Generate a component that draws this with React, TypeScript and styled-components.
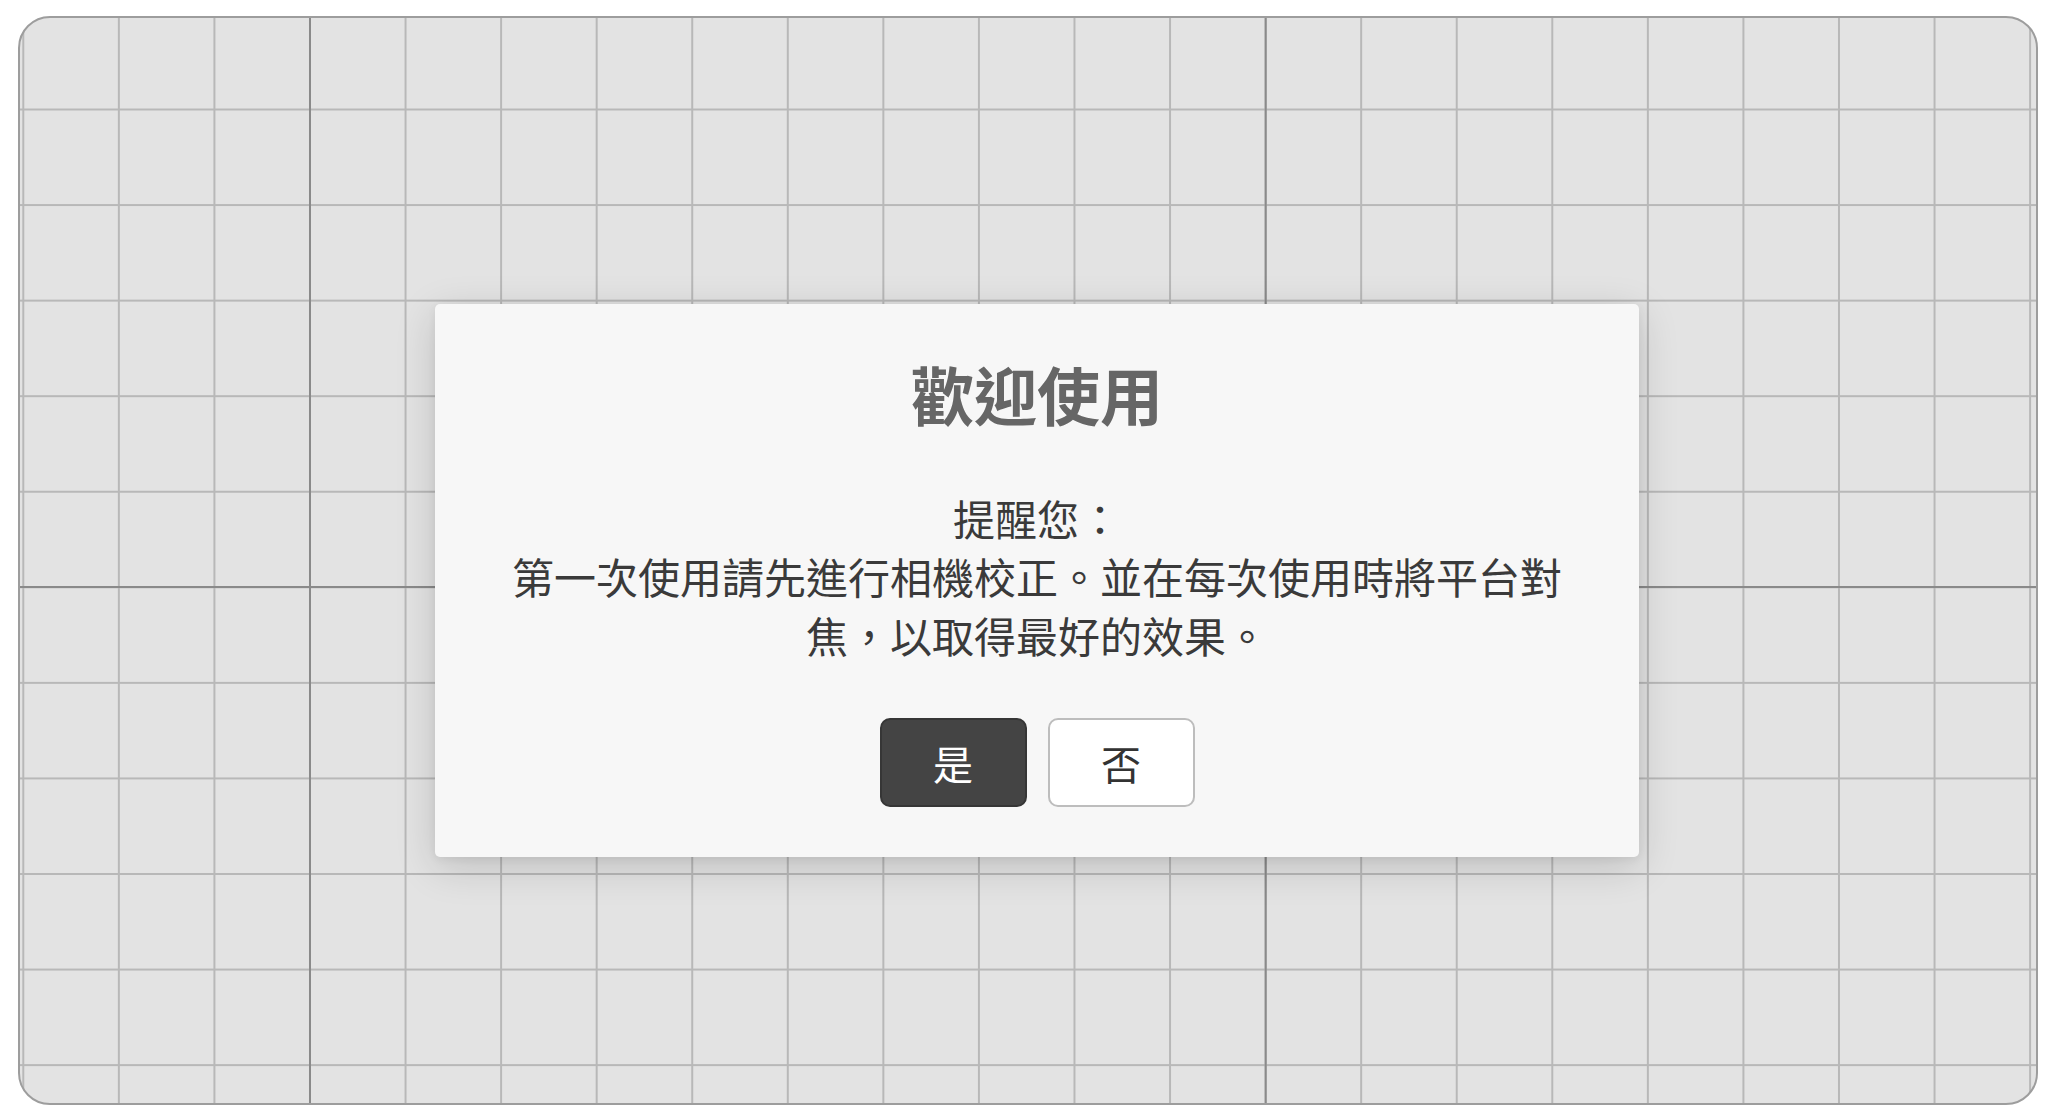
import styled, { createGlobalStyle } from 'styled-components'

const GlobalStyle = createGlobalStyle`
  html, body {
    margin: 0;
    padding: 0;
    background: #ffffff;
  }
  body {
    font-family: "Noto Sans CJK TC", "Noto Sans", sans-serif;
  }
`

const CELL = 95.57
const MAJOR = CELL * 10

const Page = styled.div`
  box-sizing: border-box;
  height: 1120px;
  padding: 16px 22px 15px 18px;
`

const Board = styled.div`
  box-sizing: border-box;
  height: 100%;
  display: flex;
  align-items: center;
  justify-content: center;
  padding: 40px 0 0 18px;
  border: 2px solid #9d9d9d;
  border-radius: 32px;
  background-color: #e3e3e3;
  background-image:
    linear-gradient(to right, #8a8a8a 0, #8a8a8a 2px, transparent 2px),
    linear-gradient(to bottom, #8a8a8a 0, #8a8a8a 2px, transparent 2px),
    linear-gradient(to right, #b8b8b8 0, #b8b8b8 2px, transparent 2px),
    linear-gradient(to bottom, #b8b8b8 0, #b8b8b8 2px, transparent 2px);
  background-size:
    ${MAJOR}px 100%,
    100% ${MAJOR}px,
    ${CELL}px 100%,
    100% ${CELL}px;
  background-position:
    289px 0,
    0 568px,
    2.3px 0,
    0 90.5px;
`

const Dialog = styled.div`
  box-sizing: border-box;
  width: 1204px;
  padding: 51px 60px 50px;
  background: #f7f7f7;
  border-radius: 5px;
  box-shadow: 0 10px 40px rgba(0, 0, 0, 0.16), 0 2px 8px rgba(0, 0, 0, 0.06);
  display: flex;
  flex-direction: column;
  align-items: center;
  text-align: center;
`

const Title = styled.h1`
  margin: 0 0 58px;
  font-size: 63px;
  line-height: 76px;
  font-weight: 700;
  color: #666666;
`

const Message = styled.p`
  margin: 0;
  font-size: 42px;
  line-height: 58.5px;
  font-weight: 400;
  color: #3a3a3a;
`

const Actions = styled.div`
  display: flex;
  gap: 21px;
  margin-top: 54px;
`

const ActionButton = styled.button<{ $primary?: boolean }>`
  box-sizing: border-box;
  width: 147px;
  height: 89px;
  border-radius: 10px;
  font-family: "Noto Sans CJK TC", "Noto Sans", sans-serif;
  font-size: 40px;
  cursor: pointer;
  border: 2px solid ${p => (p.$primary ? '#363636' : '#bdbdbd')};
  background: ${p => (p.$primary ? '#444444' : '#ffffff')};
  color: ${p => (p.$primary ? '#ffffff' : '#333333')};
`

export default function App() {
  return (
    <>
      <GlobalStyle />
      <Page>
        <Board>
          <Dialog>
            <Title>歡迎使用</Title>
            <Message>
              提醒您：
              <br />
              第一次使用請先進行相機校正。並在每次使用時將平台對焦，以取得最好的效果。
            </Message>
            <Actions>
              <ActionButton $primary>是</ActionButton>
              <ActionButton>否</ActionButton>
            </Actions>
          </Dialog>
        </Board>
      </Page>
    </>
  )
}
